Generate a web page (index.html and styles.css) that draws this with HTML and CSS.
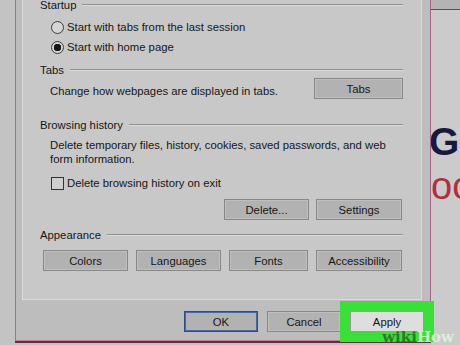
FILE: index.html
```html
<!DOCTYPE html>
<html lang="en">
<head>
    <meta charset="UTF-8">
    <meta name="viewport" content="width=device-width, initial-scale=1.0">
    <title>Internet Options</title>
    <link rel="stylesheet" href="styles.css">
</head>
<body>
    <div class="screen">
        <div class="edge"></div>

        <div class="dialog">
            <div class="panel">
                <div class="group">
                    <div class="legend">Startup</div>
                    <label class="option first"><span class="radio"></span>Start with tabs from the last session</label>
                    <label class="option"><span class="radio checked"></span>Start with home page</label>
                </div>

                <div class="group tabs">
                    <div class="legend">Tabs</div>
                    <div class="row">
                        <span class="row-text">Change how webpages are displayed in tabs.</span>
                        <button class="btn btn-tabs">Tabs</button>
                    </div>
                </div>

                <div class="group history">
                    <div class="legend">Browsing history</div>
                    <p class="desc">Delete temporary files, history, cookies, saved passwords, and web<br>form information.</p>
                    <label class="check-row"><span class="checkbox"></span>Delete browsing history on exit</label>
                    <div class="actions">
                        <button class="btn btn-delete">Delete...</button>
                        <button class="btn btn-settings">Settings</button>
                    </div>
                </div>

                <div class="group appearance">
                    <div class="legend">Appearance</div>
                    <div class="btn-grid">
                        <button class="btn">Colors</button>
                        <button class="btn">Languages</button>
                        <button class="btn">Fonts</button>
                        <button class="btn">Accessibility</button>
                    </div>
                </div>
            </div>

            <div class="footer">
                <button class="btn btn-foot btn-default">OK</button>
                <button class="btn btn-foot">Cancel</button>
                <button class="btn btn-foot btn-apply">Apply</button>
            </div>
        </div>

        <div class="page">
            <div class="page-top"></div>
            <div class="page-title">G</div>
            <div class="page-sub">oc</div>
        </div>

        <!-- watermark sits over the corner -->
        <div class="watermark">wiki<span>How</span></div>
    </div>
</body>
</html>
```

FILE: styles.css
```css
* {
    box-sizing: border-box;
}
body {
    margin: 0;
    width: 460px;
    height: 345px;
    overflow: hidden;
    background-color: #c3c3c3;
    font-family: "Liberation Sans", Arial, sans-serif;
    font-size: 11.3px;
    color: #161616;
}
.screen {
    display: flex;
    height: 345px;
    position: relative;
}
.edge {
    width: 15px;
    flex: none;
}
.dialog {
    width: 416px;
    height: 341px;
    flex: none;
    display: flex;
    flex-direction: column;
    padding-left: 6px;
    background-color: #bdbdbd;
    border-left: 1px solid #b86a86;
    border-right: 1px solid #a8628a;
    border-bottom: 1px solid #c47a90;
    box-shadow: 0 2px 0 #6a2a44;
}
.panel {
    width: 400px;
    height: 310px;
    margin-top: -10px;
    padding-top: 8px;
    background-color: #c8c8c8;
    border: 1px solid #dadada;
    border-top: none;
}
.group {
    padding: 0 18px 0 17px;
}
.legend {
    display: flex;
    align-items: center;
    height: 14px;
    line-height: 14px;
}
.legend::after {
    content: "";
    flex: 1;
    margin-left: 6px;
    border-top: 1px solid #8f8f8f;
    border-bottom: 1px solid #dcdcdc;
}
.option {
    display: flex;
    align-items: center;
    height: 20px;
    padding-left: 11px;
}
.option.first {
    margin-top: 5px;
}
.radio {
    width: 13px;
    height: 13px;
    margin-right: 3px;
    border-radius: 50%;
    border: 1px solid #3a3a3a;
    background-color: #d6d6d6;
}
.radio.checked {
    background: radial-gradient(circle, #161616 0 3.5px, #d6d6d6 4px);
}
.tabs {
    margin-top: 6px;
}
.row {
    display: flex;
    align-items: flex-end;
    justify-content: space-between;
    margin-top: 1px;
    padding-left: 10px;
}
.row-text {
    line-height: 14px;
    margin-bottom: 1px;
}
.btn {
    height: 21px;
    padding: 0;
    font: inherit;
    color: inherit;
    background-color: #b2b2b2;
    border: 1px solid #888;
    box-shadow: inset 0 0 0 1px #bfbfbf;
}
.btn-tabs {
    width: 89px;
}
.history {
    margin-top: 19px;
}
.desc {
    margin: 6px 0 0;
    padding-left: 10px;
    line-height: 14px;
}
.check-row {
    display: flex;
    align-items: center;
    height: 14px;
    margin-top: 10px;
    padding-left: 11px;
}
.checkbox {
    width: 13px;
    height: 13px;
    margin-right: 3px;
    border: 1px solid #333;
    background-color: #cfcfcf;
}
.actions {
    display: flex;
    justify-content: flex-end;
    gap: 7px;
    margin-top: 9px;
    padding-right: 1px;
}
.btn-delete {
    width: 85px;
}
.btn-settings {
    width: 86px;
}
.appearance {
    margin-top: 8px;
}
.btn-grid {
    display: grid;
    grid-template-columns: 85px 85px 79px 86px;
    column-gap: 8px;
    margin-top: 8px;
    padding-left: 3px;
}
.footer {
    display: flex;
    gap: 9px;
    padding: 11px 0 0 162px;
}
.btn-foot {
    width: 74px;
}
.btn-default {
    border-color: #2d4c8c;
    box-shadow: inset 0 0 0 1px #4a68a6;
}
.btn-apply {
    position: relative;
    z-index: 1;
    background-color: #dedede;
    border-color: #9a9a9a;
    box-shadow: 0 0 0 10px #38e038;
}
.page {
    flex: 1;
    overflow: hidden;
    background-color: #cbcbcb;
}
.page-top {
    height: 10px;
    background-color: #b4b4b4;
    border-bottom: 1px solid #505050;
}
.page-title {
    margin: 112px 0 0 -2px;
    font-size: 39px;
    font-weight: bold;
    line-height: 1;
    color: #171a3c;
}
.page-sub {
    margin: 6px 0 0 0;
    font-size: 38px;
    line-height: 1;
    color: #b03040;
}
.watermark {
    position: absolute;
    right: 6px;
    bottom: 0;
    font-family: "DejaVu Serif", serif;
    font-size: 15px;
    line-height: 15px;
    font-weight: bold;
    color: rgba(40, 95, 30, 0.8);
    z-index: 2;
}
.watermark span {
    color: rgba(225, 245, 215, 0.85);
}
```
